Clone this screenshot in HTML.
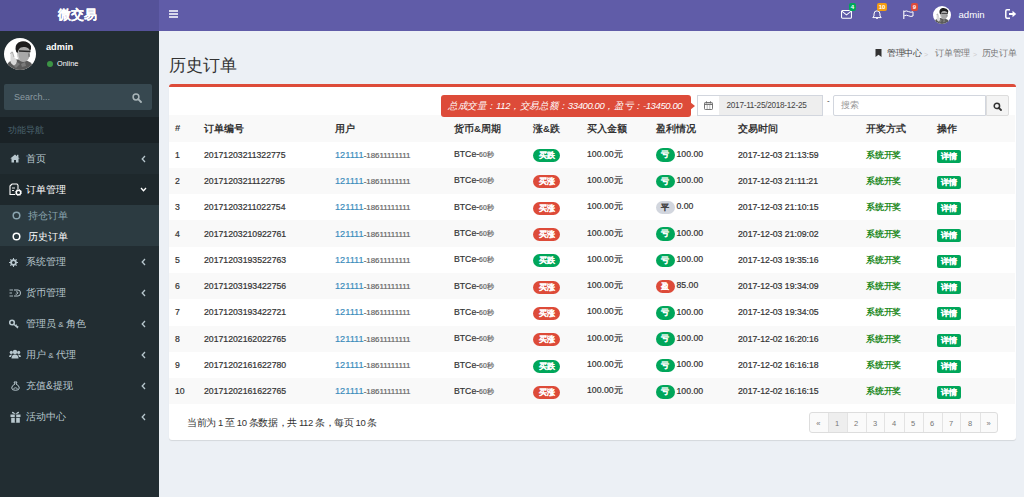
<!DOCTYPE html>
<html><head><meta charset="utf-8">
<style>
*{margin:0;padding:0;box-sizing:border-box}
html,body{width:1024px;height:497px;overflow:hidden;background:#ecf0f5;font-family:"Liberation Sans",sans-serif;color:#333}
.abs{position:absolute}
#logo{left:0;top:0;width:159px;height:31px;background:#555299;color:#fff;font-weight:bold;font-size:13px;text-align:center;line-height:29px;text-indent:-5px;text-shadow:0.4px 0 0 #fff}
#nav{left:159px;top:0;width:865px;height:31px;background:#605ca8}
#side{left:0;top:31px;width:159px;height:466px;background:#222d32}
.mi{position:absolute;left:0;width:159px;height:31px;color:#b8c7ce;font-size:10px}
.mi .t{position:absolute;left:26px;top:0;line-height:31px;white-space:nowrap}
.mi .ch{position:absolute;left:140.5px;top:12px}
.mi .ic{position:absolute;left:9px;top:9px;width:12px;height:12px}
#content{left:159px;top:30px;width:865px;height:467px}
#box{left:169px;top:84px;width:847px;height:356px;background:#fff;border-top:3px solid #dd4b39;border-radius:3px;box-shadow:0 1px 1px rgba(0,0,0,.1)}
table{border-collapse:collapse;position:absolute;left:169px;top:115px;width:846px;font-size:8.7px}
td,th{height:26.3px;padding:0;text-align:left;vertical-align:middle;white-space:nowrap}
td{-webkit-text-stroke:0.2px currentColor}
.win{-webkit-text-stroke:0}
.det,.pill,.cb{-webkit-text-stroke:0.15px #fff}
.cb.gr{-webkit-text-stroke:0.15px #444}
th{font-weight:bold;height:26.5px;font-size:9.5px;padding-top:2px}
tr:nth-child(odd){background:#f9f9f9}
.c0{padding-left:6px;width:35px}
.lnk{color:#3c8dbc;font-size:9.2px}
.sm{font-size:6.8px;color:#666}
.ph{font-size:7.9px;color:#666}
.pill{display:inline-block;width:27px;height:13px;border-radius:7px;color:#fff;font-size:8px;font-weight:bold;text-align:center;line-height:13px;vertical-align:middle;position:relative;top:1px}

.cb{display:inline-block;width:18.5px;height:13.5px;border-radius:7px;color:#fff;font-size:8px;font-weight:bold;position:relative;top:0.5px;text-align:center;line-height:13.5px;vertical-align:middle;margin-right:2px}
.g{background:#00a65a}.r{background:#dd4b39}.gr{background:#d2d6de;color:#444}
.win{color:#1f8a1f;font-weight:bold;position:relative;top:1px;letter-spacing:-0.25px}
.det{position:relative;top:1.5px;display:inline-block;width:24px;height:13px;background:#00a65a;color:#fff;font-size:8px;font-weight:bold;text-align:center;line-height:13px;border-radius:2px}
.bc{top:47.5px;font-size:8.8px;line-height:11px;white-space:nowrap;letter-spacing:-0.35px}
</style></head><body>
<div id="logo" class="abs">微交易</div>
<div id="nav" class="abs"></div>
<svg class="abs" style="left:169px;top:10px" width="10" height="8" viewBox="0 0 10 8"><path d="M0 1 H9 M0 4 H9 M0 7 H9" stroke="#fff" stroke-width="1.4"/></svg>
<svg class="abs" style="left:840.5px;top:9.5px" width="11" height="9" viewBox="0 0 11 9"><rect x="0.55" y="0.55" width="9.9" height="7.6" rx="1" fill="none" stroke="#fff" stroke-width="1.05"/><path d="M0.8 1.2 L5.5 4.8 L10.2 1.2" fill="none" stroke="#fff" stroke-width="1.05"/></svg>
<div class="abs" style="left:849px;top:3px;width:7px;height:8px;background:#00a65a;border-radius:2px;color:#fff;font-size:6px;font-weight:bold;text-align:center;line-height:8px">4</div>
<svg class="abs" style="left:872px;top:10px" width="10" height="9" viewBox="0 0 10 9"><path d="M5 0.8 Q2 0.8 2 4 L2 6 L0.8 7.6 L9.2 7.6 L8 6 L8 4 Q8 0.8 5 0.8Z" fill="none" stroke="#fff" stroke-width="1"/><path d="M4 8 Q5 9.3 6 8" fill="#fff" stroke="#fff" stroke-width="0.8"/></svg>
<div class="abs" style="left:877px;top:3px;width:10px;height:8px;background:#f39c12;border-radius:2px;color:#fff;font-size:6px;font-weight:bold;text-align:center;line-height:8px">10</div>
<svg class="abs" style="left:902.5px;top:9.5px" width="11" height="9" viewBox="0 0 11 9"><path d="M0.8 0.5 V9" stroke="#fff" stroke-width="1.1"/><path d="M1.2 1.5 Q3.5 0.3 5.5 1.6 Q8 2.8 10 1.8 L10 6 Q8 7 5.5 5.8 Q3.5 4.6 1.2 5.8" fill="none" stroke="#fff" stroke-width="1"/></svg>
<div class="abs" style="left:911px;top:3px;width:7px;height:8px;background:#dd4b39;border-radius:2px;color:#fff;font-size:6px;font-weight:bold;text-align:center;line-height:8px">9</div>
<svg class="abs" style="left:933px;top:5.5px" width="18" height="18" viewBox="0 0 32 32">
  <defs><clipPath id="av2"><circle cx="16" cy="16" r="16"/></clipPath></defs>
  <circle cx="16" cy="16" r="16" fill="#fff"/>
  <g clip-path="url(#av2)">
   <path d="M2 32 L4 25 Q8 21 14 21.5 L20 22 Q27 23 30 29 L30 32Z" fill="#5a5a5a"/>
   <path d="M9 27 L13 24 L16 26 L12 30Z M17 26 L21 24 L22 28 L18 29Z" fill="#7a7a7a"/>
   <path d="M13 9 Q15 6 20 6.5 Q25 7.5 26 12 Q26.5 17 25 20 Q23 24 19 24 Q15 23.5 14 20 Q12.5 15 13 9Z" fill="#a8a8a8"/>
   <path d="M14 12 Q14 18 16 22 Q14.5 22 13.5 19 Q12.5 15 14 12Z" fill="#d0d0d0"/>
   <path d="M11.5 11 Q11 5 17 3.5 Q24 2.5 27 8 Q27.5 11 26 13 Q25 9.5 21 9 Q16.5 8.5 15 11 Q14 13 13.5 15 Q11.8 14 11.5 11Z" fill="#1e1e1e"/>
   <path d="M15 12.3 L26.5 12.8 L26.5 14.2 L15 13.8Z" fill="#2a2a2a"/>
   <path d="M24 15 Q26.5 16 25.5 19 L24.5 19Z" fill="#777"/>
   <path d="M6.5 16 Q7 13.5 8.5 14 L10 19 Q12 20.5 13 23 Q12.5 26.5 10 27.5 Q7.5 27 6.5 24Z" fill="#d8d8d8"/>
   <path d="M6.5 16 Q7 13.5 8.5 14 L10 19" fill="none" stroke="#888" stroke-width="0.6"/>
  </g>
</svg>
<div class="abs" style="left:958.5px;top:9px;color:#fff;font-size:9.6px;line-height:11px">admin</div>
<svg class="abs" style="left:1005px;top:9px" width="12" height="10" viewBox="0 0 12 10"><path d="M5 0.8 H2 Q0.8 0.8 0.8 2 V8 Q0.8 9.2 2 9.2 H5" fill="none" stroke="#fff" stroke-width="1.5"/><path d="M4 4 H7.5 V1.8 L11.2 5 L7.5 8.2 V6 H4Z" fill="#fff"/></svg>

<div id="side" class="abs"><div style="position:absolute;left:0;top:-1px;width:159px;height:467px">
 <svg class="abs" style="left:4px;top:8px" width="32" height="32" viewBox="0 0 32 32">
  <defs><clipPath id="av1"><circle cx="16" cy="16" r="16"/></clipPath></defs>
  <circle cx="16" cy="16" r="16" fill="#fff"/>
  <g clip-path="url(#av1)">
   <path d="M2 32 L4 25 Q8 21 14 21.5 L20 22 Q27 23 30 29 L30 32Z" fill="#5a5a5a"/>
   <path d="M9 27 L13 24 L16 26 L12 30Z M17 26 L21 24 L22 28 L18 29Z" fill="#7a7a7a"/>
   <path d="M13 9 Q15 6 20 6.5 Q25 7.5 26 12 Q26.5 17 25 20 Q23 24 19 24 Q15 23.5 14 20 Q12.5 15 13 9Z" fill="#a8a8a8"/>
   <path d="M14 12 Q14 18 16 22 Q14.5 22 13.5 19 Q12.5 15 14 12Z" fill="#d0d0d0"/>
   <path d="M11.5 11 Q11 5 17 3.5 Q24 2.5 27 8 Q27.5 11 26 13 Q25 9.5 21 9 Q16.5 8.5 15 11 Q14 13 13.5 15 Q11.8 14 11.5 11Z" fill="#1e1e1e"/>
   <path d="M15 12.3 L26.5 12.8 L26.5 14.2 L15 13.8Z" fill="#2a2a2a"/>
   <path d="M24 15 Q26.5 16 25.5 19 L24.5 19Z" fill="#777"/>
   <path d="M6.5 16 Q7 13.5 8.5 14 L10 19 Q12 20.5 13 23 Q12.5 26.5 10 27.5 Q7.5 27 6.5 24Z" fill="#d8d8d8"/>
   <path d="M6.5 16 Q7 13.5 8.5 14 L10 19" fill="none" stroke="#888" stroke-width="0.6"/>
  </g>
 </svg>
 <div class="abs" style="left:46px;top:12px;color:#fff;font-weight:bold;font-size:9.2px;line-height:10px">admin</div>
 <div class="abs" style="left:46.5px;top:31px;width:6.3px;height:6.3px;border-radius:50%;background:#3c9445"></div>
 <div class="abs" style="left:57px;top:29px;color:#fff;font-size:7.4px;line-height:10px">Online</div>
 <div class="abs" style="left:4px;top:54px;width:148px;height:26px;background:#374850;border-radius:2px"></div>
 <div class="abs" style="left:14px;top:62px;color:#8c9ba1;font-size:9px;line-height:10px">Search...</div>
 <svg class="abs" style="left:132px;top:63px" width="10" height="10" viewBox="0 0 10 10"><circle cx="4" cy="4" r="2.9" fill="none" stroke="#a9b5b9" stroke-width="1.5"/><path d="M6.2 6.2 L9 9" stroke="#a9b5b9" stroke-width="1.8" stroke-linecap="round"/></svg>
 <div class="abs" style="left:0;top:87px;width:159px;height:26px;background:#1a2226"></div>
 <div class="abs" style="left:8px;top:95px;color:#4b646f;font-size:8.5px;line-height:10px">功能导航</div>
<div class="mi" style="top:113px;"><svg class="abs" style="left:9.5px;top:11px" width="10" height="9" viewBox="0 0 10 9"><path d="M5 0.5 L0.3 4.6 L1.5 4.6 L1.5 8.5 L4 8.5 L4 6 L6 6 L6 8.5 L8.5 8.5 L8.5 4.6 L9.7 4.6Z" fill="#b8c7ce"/><rect x="7" y="0.8" width="1.4" height="2.5" fill="#b8c7ce"/></svg><span class="t">首页</span><svg class="ch" width="5" height="8" viewBox="0 0 5 8"><path d="M4 1 L1.2 4 L4 7" fill="none" stroke="#b8c7ce" stroke-width="1.3"/></svg></div>
<div class="mi" style="top:144px;background:#1e282c;color:#fff"><svg class="abs" style="left:9px;top:8.5px" width="13" height="13" viewBox="0 0 13 13"><path d="M3 1 L8 1 L9 2.2 L9 6" fill="none" stroke="#fff" stroke-width="1.1"/><path d="M3 1 L1 3 L1 11.5 L6 11.5" fill="none" stroke="#fff" stroke-width="1.1"/><path d="M3 5 L6 5 M3 7.5 L5 7.5" stroke="#fff" stroke-width="0.9"/><circle cx="9.5" cy="9.5" r="2.2" fill="none" stroke="#fff" stroke-width="1.4"/><circle cx="9.5" cy="9.5" r="3.2" fill="none" stroke="#fff" stroke-width="0.8" stroke-dasharray="1.2 1.3"/></svg><span class="t">订单管理</span><svg class="ch" style="left:139.5px;top:13px" width="7" height="5" viewBox="0 0 7 5"><path d="M1 1 L3.5 3.8 L6 1" fill="none" stroke="#fff" stroke-width="1.3"/></svg></div>
<div class="abs" style="left:0;top:175px;width:159px;height:41px;background:#2c3b41"></div>
<div class="mi" style="top:175px;height:21px;color:#8aa4af"><svg class="abs" style="left:12px;top:6px" width="9" height="9" viewBox="0 0 9 9"><circle cx="4.5" cy="4.5" r="3.3" fill="none" stroke="#8aa4af" stroke-width="1.5"/></svg><span class="t" style="left:28px;line-height:21px">持仓订单</span></div>
<div class="mi" style="top:195.5px;height:21px;color:#fff"><svg class="abs" style="left:12px;top:6px" width="9" height="9" viewBox="0 0 9 9"><circle cx="4.5" cy="4.5" r="3.3" fill="none" stroke="#fff" stroke-width="1.5"/></svg><span class="t" style="left:28px;line-height:21px">历史订单</span></div>
<div class="mi" style="top:216px;"><svg class="abs" style="left:9.4px;top:12px" width="9" height="9" viewBox="0 0 9 9"><path fill-rule="evenodd" d="M7.85 3.92 L8.97 4.01 L8.97 4.99 L7.85 5.08 L7.28 6.46 L8.01 7.31 L7.31 8.01 L6.46 7.28 L5.08 7.85 L4.99 8.97 L4.01 8.97 L3.92 7.85 L2.54 7.28 L1.69 8.01 L0.99 7.31 L1.72 6.46 L1.15 5.08 L0.03 4.99 L0.03 4.01 L1.15 3.92 L1.72 2.54 L0.99 1.69 L1.69 0.99 L2.54 1.72 L3.92 1.15 L4.01 0.03 L4.99 0.03 L5.08 1.15 L6.46 1.72 L7.31 0.99 L8.01 1.69 L7.28 2.54Z M6.00 4.5 A1.5 1.5 0 1 0 3.00 4.5 A1.5 1.5 0 1 0 6.00 4.5Z" fill="#b8c7ce"/></svg><span class="t">系统管理</span><svg class="ch" width="5" height="8" viewBox="0 0 5 8"><path d="M4 1 L1.2 4 L4 7" fill="none" stroke="#b8c7ce" stroke-width="1.3"/></svg></div>
<div class="mi" style="top:247px;"><svg class="abs" style="left:9.4px;top:11.5px" width="12" height="8" viewBox="0 0 12 8"><path d="M0.5 1 L4 1 M0.5 4 L3 4 M0.5 7 L4 7" stroke="#b8c7ce" stroke-width="0.9"/><path d="M5 1 L9 1 Q11.5 1 11.5 4 Q11.5 7 9 7 L5 7" fill="none" stroke="#b8c7ce" stroke-width="1"/><path d="M7 3 Q8.5 2 9 4 Q8 6 6.5 5" fill="none" stroke="#b8c7ce" stroke-width="0.9"/></svg><span class="t">货币管理</span><svg class="ch" width="5" height="8" viewBox="0 0 5 8"><path d="M4 1 L1.2 4 L4 7" fill="none" stroke="#b8c7ce" stroke-width="1.3"/></svg></div>
<div class="mi" style="top:278px;"><svg class="abs" style="left:9.4px;top:11px" width="10" height="10" viewBox="0 0 10 10"><circle cx="3" cy="3.5" r="2.3" fill="none" stroke="#b8c7ce" stroke-width="1.6"/><path d="M4.5 5 L9 9 M6.5 7 L7.8 5.8 M8 8.3 L9.2 7.2" stroke="#b8c7ce" stroke-width="1.4"/></svg><span class="t">管理员<span style="font-size:8px"> &amp; </span>角色</span><svg class="ch" width="5" height="8" viewBox="0 0 5 8"><path d="M4 1 L1.2 4 L4 7" fill="none" stroke="#b8c7ce" stroke-width="1.3"/></svg></div>
<div class="mi" style="top:309px;"><svg class="abs" style="left:9px;top:10px" width="12" height="10" viewBox="0 0 12 10"><circle cx="6" cy="3" r="2.2" fill="#b8c7ce"/><circle cx="2.3" cy="3.4" r="1.6" fill="#b8c7ce"/><circle cx="9.7" cy="3.4" r="1.6" fill="#b8c7ce"/><path d="M2.5 9.5 Q2.5 5.5 6 5.5 Q9.5 5.5 9.5 9.5Z" fill="#b8c7ce"/><path d="M0 8 Q0 5.5 2.3 5.5 L3 5.8 Q2 7 2 8Z M12 8 Q12 5.5 9.7 5.5 L9 5.8 Q10 7 10 8Z" fill="#b8c7ce"/></svg><span class="t">用户<span style="font-size:8px"> &amp; </span>代理</span><svg class="ch" width="5" height="8" viewBox="0 0 5 8"><path d="M4 1 L1.2 4 L4 7" fill="none" stroke="#b8c7ce" stroke-width="1.3"/></svg></div>
<div class="mi" style="top:340px;"><svg class="abs" style="left:11px;top:10.5px" width="9" height="10" viewBox="0 0 9 10"><path d="M3 1 L6 1 L5 3 Q8.3 4.5 8.3 7 Q8.3 9.3 4.5 9.3 Q0.7 9.3 0.7 7 Q0.7 4.5 4 3Z" fill="none" stroke="#b8c7ce" stroke-width="1"/><path d="M2.5 7.5 Q4.5 6 6.5 7.5" stroke="#b8c7ce" stroke-width="0.9" fill="none"/></svg><span class="t">充值&amp;提现</span><svg class="ch" width="5" height="8" viewBox="0 0 5 8"><path d="M4 1 L1.2 4 L4 7" fill="none" stroke="#b8c7ce" stroke-width="1.3"/></svg></div>
<div class="mi" style="top:371px;"><svg class="abs" style="left:10.3px;top:9.5px" width="11" height="12" viewBox="0 0 11 12"><path d="M0.5 3.5 L10.5 3.5 L10.5 6 L0.5 6Z M1.2 6.8 L9.8 6.8 L9.8 11.8 L1.2 11.8Z" fill="#b8c7ce"/><path d="M5.5 3 Q3 0 2 1 Q1.5 2.5 5 3Z M5.5 3 Q8 0 9 1 Q9.5 2.5 6 3Z" fill="#b8c7ce"/><rect x="4.8" y="3.5" width="1.4" height="8.3" fill="#222d32"/></svg><span class="t">活动中心</span><svg class="ch" width="5" height="8" viewBox="0 0 5 8"><path d="M4 1 L1.2 4 L4 7" fill="none" stroke="#b8c7ce" stroke-width="1.3"/></svg></div>
</div></div>

<div class="abs" style="left:169px;top:56.3px;font-size:17px;line-height:20px;color:#333">历史订单</div>
<svg class="abs" style="left:875px;top:49px" width="7" height="8" viewBox="0 0 7 8"><path d="M0.5 0 H6.5 V8 L3.5 5.8 L0.5 8Z" fill="#333"/></svg>
<div class="abs bc" style="left:887px;color:#444">管理中心</div><div class="abs bc" style="left:924px;color:#ccc;font-size:7px;top:49px">&gt;</div><div class="abs bc" style="left:935.3px;color:#777">订单管理</div><div class="abs bc" style="left:973px;color:#ccc;font-size:7px;top:49px">&gt;</div><div class="abs bc" style="left:981.8px;color:#777">历史订单</div>
<div id="box" class="abs"></div>
<div class="abs" style="z-index:3;left:441px;top:94.5px;width:250px;height:22px;background:#dd4b39;border-radius:3px;color:#fff;font-style:italic;font-size:9.5px;letter-spacing:-0.38px;line-height:22px;padding-left:7px;white-space:nowrap">总成交量：112，交易总额：33400.00，盈亏：-13450.00</div>
<div class="abs" style="z-index:3;left:690px;top:101.5px;width:0;height:0;border-top:4.5px solid transparent;border-bottom:4.5px solid transparent;border-left:5px solid #dd4b39"></div>
<div class="abs" style="z-index:3;left:697px;top:95px;width:23px;height:20.5px;border:1px solid #d2d6de;background:#fff"></div>
<svg class="abs" style="z-index:3;left:704px;top:101px" width="9" height="9" viewBox="0 0 9 9"><rect x="0.5" y="1.5" width="8" height="7" rx="0.8" fill="none" stroke="#666" stroke-width="0.9"/><path d="M0.5 3.3 H8.5" stroke="#666" stroke-width="1.2"/><path d="M2.5 0.3 V2.3 M6.5 0.3 V2.3" stroke="#666" stroke-width="0.9"/><path d="M3.2 3.5 V8.5 M5.8 3.5 V8.5" stroke="#888" stroke-width="0.6"/></svg>
<div class="abs" style="z-index:3;left:719px;top:95px;width:104px;height:20.5px;border:1px solid #d2d6de;border-left:none;background:#eee"></div>
<div class="abs" style="z-index:3;left:726.5px;top:101px;font-size:8.2px;letter-spacing:-0.26px;line-height:10px;color:#444">2017-11-25/2018-12-25</div>
<div class="abs" style="left:827px;top:96px;font-size:8px;line-height:10px;color:#333">-</div>
<div class="abs" style="z-index:3;left:833px;top:95px;width:153px;height:20.5px;border:1px solid #d2d6de;background:#fff;border-radius:2px 0 0 2px"></div>
<div class="abs" style="z-index:3;left:840.5px;top:100px;font-size:8.5px;line-height:10px;color:#999">搜索</div>
<div class="abs" style="z-index:3;left:985.5px;top:95px;width:23px;height:20.5px;border:1px solid #ddd;background:#f4f4f4;border-radius:0 2px 2px 0"></div>
<svg class="abs" style="z-index:3;left:992.5px;top:102px" width="9" height="9" viewBox="0 0 9 9"><circle cx="3.9" cy="3.9" r="2.7" fill="none" stroke="#333" stroke-width="1.5"/><path d="M5.8 5.8 L8 8" stroke="#333" stroke-width="1.8" stroke-linecap="round"/></svg>
<table>
<tr><th class="c0"><span style="position:relative;top:-1.5px">#</span></th><th style="width:131px">订单编号</th><th style="width:119px">用户</th><th style="width:79px">货币&amp;周期</th><th style="width:54px">涨&amp;跌</th><th style="width:69px">买入金额</th><th style="width:82px">盈利情况</th><th style="width:128px">交易时间</th><th style="width:71px">开奖方式</th><th>操作</th></tr>
<tr><td class="c0">1</td><td>20171203211322775</td><td><span class="lnk">121111</span><span class="ph">-18611111111</span></td><td>BTCe-<span class="sm">60秒</span></td><td><span class="pill g">买跌</span></td><td>100.00元</td><td><span class="cb g">亏</span>100.00</td><td>2017-12-03 21:13:59</td><td><span class="win">系统开奖</span></td><td><span class="det">详情</span></td></tr>
<tr><td class="c0">2</td><td>20171203211122795</td><td><span class="lnk">121111</span><span class="ph">-18611111111</span></td><td>BTCe-<span class="sm">60秒</span></td><td><span class="pill r">买涨</span></td><td>100.00元</td><td><span class="cb g">亏</span>100.00</td><td>2017-12-03 21:11:21</td><td><span class="win">系统开奖</span></td><td><span class="det">详情</span></td></tr>
<tr><td class="c0">3</td><td>20171203211022754</td><td><span class="lnk">121111</span><span class="ph">-18611111111</span></td><td>BTCe-<span class="sm">60秒</span></td><td><span class="pill r">买涨</span></td><td>100.00元</td><td><span class="cb gr">平</span>0.00</td><td>2017-12-03 21:10:15</td><td><span class="win">系统开奖</span></td><td><span class="det">详情</span></td></tr>
<tr><td class="c0">4</td><td>20171203210922761</td><td><span class="lnk">121111</span><span class="ph">-18611111111</span></td><td>BTCe-<span class="sm">60秒</span></td><td><span class="pill r">买涨</span></td><td>100.00元</td><td><span class="cb g">亏</span>100.00</td><td>2017-12-03 21:09:02</td><td><span class="win">系统开奖</span></td><td><span class="det">详情</span></td></tr>
<tr><td class="c0">5</td><td>20171203193522763</td><td><span class="lnk">121111</span><span class="ph">-18611111111</span></td><td>BTCe-<span class="sm">60秒</span></td><td><span class="pill g">买跌</span></td><td>100.00元</td><td><span class="cb g">亏</span>100.00</td><td>2017-12-03 19:35:16</td><td><span class="win">系统开奖</span></td><td><span class="det">详情</span></td></tr>
<tr><td class="c0">6</td><td>20171203193422756</td><td><span class="lnk">121111</span><span class="ph">-18611111111</span></td><td>BTCe-<span class="sm">60秒</span></td><td><span class="pill r">买涨</span></td><td>100.00元</td><td><span class="cb r">盈</span>85.00</td><td>2017-12-03 19:34:09</td><td><span class="win">系统开奖</span></td><td><span class="det">详情</span></td></tr>
<tr><td class="c0">7</td><td>20171203193422721</td><td><span class="lnk">121111</span><span class="ph">-18611111111</span></td><td>BTCe-<span class="sm">60秒</span></td><td><span class="pill r">买涨</span></td><td>100.00元</td><td><span class="cb g">亏</span>100.00</td><td>2017-12-03 19:34:05</td><td><span class="win">系统开奖</span></td><td><span class="det">详情</span></td></tr>
<tr><td class="c0">8</td><td>20171202162022765</td><td><span class="lnk">121111</span><span class="ph">-18611111111</span></td><td>BTCe-<span class="sm">60秒</span></td><td><span class="pill r">买涨</span></td><td>100.00元</td><td><span class="cb g">亏</span>100.00</td><td>2017-12-02 16:20:16</td><td><span class="win">系统开奖</span></td><td><span class="det">详情</span></td></tr>
<tr><td class="c0">9</td><td>20171202161622780</td><td><span class="lnk">121111</span><span class="ph">-18611111111</span></td><td>BTCe-<span class="sm">60秒</span></td><td><span class="pill g">买跌</span></td><td>100.00元</td><td><span class="cb g">亏</span>100.00</td><td>2017-12-02 16:16:18</td><td><span class="win">系统开奖</span></td><td><span class="det">详情</span></td></tr>
<tr><td class="c0">10</td><td>20171202161622765</td><td><span class="lnk">121111</span><span class="ph">-18611111111</span></td><td>BTCe-<span class="sm">60秒</span></td><td><span class="pill r">买涨</span></td><td>100.00元</td><td><span class="cb g">亏</span>100.00</td><td>2017-12-02 16:16:15</td><td><span class="win">系统开奖</span></td><td><span class="det">详情</span></td></tr>
</table>
<div class="abs" style="left:187px;top:417px;font-size:9.5px;letter-spacing:-0.42px;line-height:12px;color:#333;white-space:nowrap">当前为 1 至 10 条数据，共 112 条，每页 10 条</div>
<div class="abs" style="left:809px;top:412px;width:189px;height:21px;border:1px solid #ddd;border-radius:3px;background:#fafafa"></div>
<div class="abs" style="left:828px;top:413px;width:19px;height:19px;background:#eee"></div>
<div class="abs" style="left:828px;top:413px;width:1px;height:19px;background:#e3e3e3"></div>
<div class="abs" style="left:847px;top:413px;width:1px;height:19px;background:#e3e3e3"></div>
<div class="abs" style="left:866px;top:413px;width:1px;height:19px;background:#e3e3e3"></div>
<div class="abs" style="left:884px;top:413px;width:1px;height:19px;background:#e3e3e3"></div>
<div class="abs" style="left:904px;top:413px;width:1px;height:19px;background:#e3e3e3"></div>
<div class="abs" style="left:923px;top:413px;width:1px;height:19px;background:#e3e3e3"></div>
<div class="abs" style="left:942px;top:413px;width:1px;height:19px;background:#e3e3e3"></div>
<div class="abs" style="left:960px;top:413px;width:1px;height:19px;background:#e3e3e3"></div>
<div class="abs" style="left:980px;top:413px;width:1px;height:19px;background:#e3e3e3"></div>
<div class="abs" style="left:810.4px;top:419px;width:16px;text-align:center;font-size:7.5px;line-height:10px;color:#777">«</div>
<div class="abs" style="left:829.2px;top:419px;width:16px;text-align:center;font-size:7.5px;line-height:10px;color:#777">1</div>
<div class="abs" style="left:848.2px;top:419px;width:16px;text-align:center;font-size:7.5px;line-height:10px;color:#777">2</div>
<div class="abs" style="left:867.0px;top:419px;width:16px;text-align:center;font-size:7.5px;line-height:10px;color:#777">3</div>
<div class="abs" style="left:886.1px;top:419px;width:16px;text-align:center;font-size:7.5px;line-height:10px;color:#777">4</div>
<div class="abs" style="left:905.2px;top:419px;width:16px;text-align:center;font-size:7.5px;line-height:10px;color:#777">5</div>
<div class="abs" style="left:924.0px;top:419px;width:16px;text-align:center;font-size:7.5px;line-height:10px;color:#777">6</div>
<div class="abs" style="left:943.0px;top:419px;width:16px;text-align:center;font-size:7.5px;line-height:10px;color:#777">7</div>
<div class="abs" style="left:962.0px;top:419px;width:16px;text-align:center;font-size:7.5px;line-height:10px;color:#777">8</div>
<div class="abs" style="left:980.7px;top:419px;width:16px;text-align:center;font-size:7.5px;line-height:10px;color:#777">»</div>
</body></html>
